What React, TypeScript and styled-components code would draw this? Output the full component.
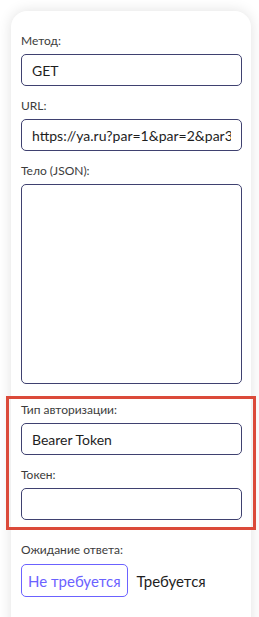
import styled, { createGlobalStyle } from "styled-components";

const GlobalStyle = createGlobalStyle`
  html, body {
    margin: 0;
    background: #ffffff;
    font-family: "Lato", "Liberation Sans", sans-serif;
  }
`;

function App() {
  return (
    <>
      <GlobalStyle />
      <Page>
        <Card>
          <Field>
            <Label>Метод:</Label>
            <Input readOnly value="GET" />
          </Field>
          <Field>
            <Label>URL:</Label>
            <Input readOnly value="https://ya.ru?par=1&par=2&par3=3" />
          </Field>
          <Field>
            <Label>Тело (JSON):</Label>
            <TextArea readOnly value="" />
          </Field>
          <AuthSection>
            <Field>
              <Label>Тип авторизации:</Label>
              <Input readOnly value="Bearer Token" />
            </Field>
            <Field>
              <Label>Токен:</Label>
              <Input readOnly value="" />
            </Field>
          </AuthSection>
          <Field>
            <Label>Ожидание ответа:</Label>
            <Toggle>
              <Option active>Не требуется</Option>
              <Option>Требуется</Option>
            </Toggle>
          </Field>
        </Card>
      </Page>
    </>
  );
}

const Page = styled.div`
  padding: 11px 8px 0 11px;
  height: 617px;
  box-sizing: border-box;
  overflow: hidden;
`;

const Card = styled.div`
  width: 240px;
  box-sizing: border-box;
  padding: 22px 9px 60px 10px;
  background: #fff;
  border-radius: 16px;
  box-shadow: 0 0 14px rgba(0, 0, 0, 0.12);
  display: flex;
  flex-direction: column;
  gap: 12px;
`;

const Field = styled.div`
  display: flex;
  flex-direction: column;
  gap: 6px;
`;

const Label = styled.span`
  font-size: 12px;
  line-height: 15px;
  color: #3c3c3c;
  font-weight: 400;
`;

const Input = styled.input`
  height: 32px;
  width: 100%;
  box-sizing: border-box;
  border: 1px solid #3f4170;
  border-radius: 5px;
  padding: 0 10px;
  font-family: inherit;
  font-size: 14px;
  color: #1e1e1e;
  background: #fff;
  outline: none;
`;

const TextArea = styled.textarea`
  height: 200px;
  width: 100%;
  box-sizing: border-box;
  border: 1px solid #3f4170;
  border-radius: 5px;
  resize: none;
  background: #fff;
  outline: none;
`;

const AuthSection = styled.div`
  margin: 0 -14px 0 -15px;
  border: 3px solid #db4a3a;
  padding: 3px 11px 7px 12px;
  display: flex;
  flex-direction: column;
  gap: 12px;
`;

const Toggle = styled.div`
  display: flex;
  align-items: center;
  gap: 2px;
  margin-top: 1px;
`;

const Option = styled.button<{ active?: boolean }>`
  height: 33px;
  padding: 0 6px;
  border: 1px solid ${(p) => (p.active ? "#6b62ff" : "transparent")};
  border-radius: 5px;
  background: #fff;
  color: ${(p) => (p.active ? "#6b62ff" : "#1e1e1e")};
  font-family: inherit;
  font-size: 15px;
`;

export default App;
